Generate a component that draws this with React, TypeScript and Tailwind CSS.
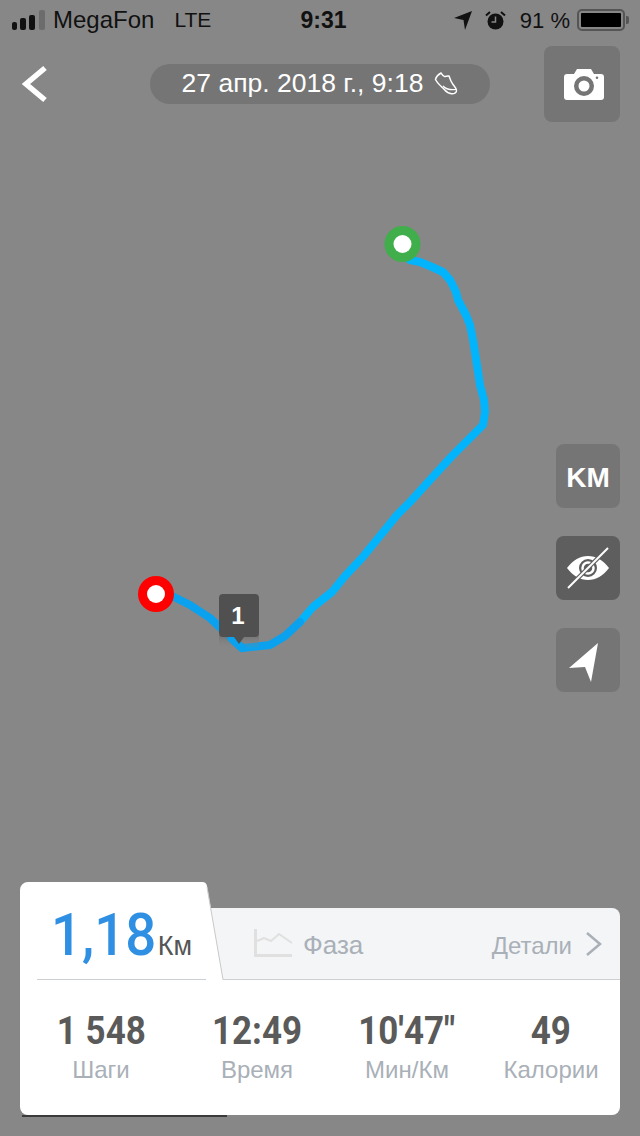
import React from "react";

const upper = "410,260 420,262 432,267 443,272 450,280 456,292 458,300 466,315 470,325 473,340 477,365 480,385 484,400 485,412 483,425 470,438 452,456 430,480 410,502 397,515 362,558 345,576 332,592 313,607 300,622";
const lower = "300,622 285,636 270,645 242,648 228,635 210,618 190,605 172,596";

function RouteMap() {
  return (
    <svg className="absolute inset-0" width="640" height="1136" viewBox="0 0 640 1136" fill="none">
      <defs>
        <linearGradient id="pinShadow" x1="0" y1="0" x2="0" y2="1">
          <stop offset="0" stopColor="#6e6e6e" stopOpacity=".8" />
          <stop offset="1" stopColor="#878787" stopOpacity="0" />
        </linearGradient>
      </defs>
      <polyline points={upper} stroke="#02b4fc" strokeWidth="8" strokeLinejoin="round" strokeLinecap="round" />
      <polyline points={lower} stroke="#0aa2ee" strokeWidth="8" strokeLinejoin="round" strokeLinecap="round" />
      <circle cx="402.500" cy="244" r="18" fill="#3fae4b" />
      <circle cx="402.500" cy="244" r="9" fill="#fff" />
      <circle cx="156" cy="594" r="18" fill="#ff0000" />
      <circle cx="156" cy="594" r="9" fill="#fff" />
      <rect x="219" y="635" width="40" height="14" fill="url(#pinShadow)" />
      <polyline points="242,648 232,639" stroke="#0aa2ee" strokeWidth="8" strokeLinecap="round" />
      <path d="M223 594h32a4 4 0 0 1 4 4v35a4 4 0 0 1-4 4h-11l-5 7-5-7h-11a4 4 0 0 1-4-4v-35a4 4 0 0 1 4-4z" fill="#505050" />
    </svg>
  );
}

function StatusBar() {
  return (
    <div className="grid h-10 grid-cols-[1fr_auto_1fr] items-center pl-3 pr-[11px] text-[#111] text-[22px]">
      <div className="flex items-center">
        <div className="mb-[1px] flex items-end gap-[3px]">
          <span className="h-2 w-[5px] rounded-[2px] bg-[#111]" />
          <span className="h-3 w-[6px] rounded-[2px] bg-[#111]" />
          <span className="h-[15px] w-[6px] rounded-[2px] bg-[#111]" />
          <span className="ml-[1px] h-5 w-[6px] rounded-[2px] bg-[#6c6c6c]" />
        </div>
        <span className="ml-[8px] text-[24px]">MegaFon</span>
        <span className="ml-[20px] text-[21px]">LTE</span>
      </div>
      <span className="ml-[6px] text-[23px] font-bold text-[#111]">9:31</span>
      <div className="flex items-center justify-end">
        <svg className="-ml-[2px]" width="20" height="20" viewBox="0 0 20 20">
          <path d="M1 8 19 1 12 20 10.500 10z" fill="#111" />
        </svg>
        <svg className="ml-[12px]" width="21" height="21" viewBox="0 0 21 21" fill="none">
          <circle cx="10.500" cy="11.500" r="8" fill="#111" />
          <path d="M10.500 6.500v5.500h-4" stroke="#878787" strokeWidth="1.500" />
          <path d="M1 5.500 5 2M20 5.500 16 2" stroke="#111" strokeWidth="2" />
        </svg>
        <span className="ml-[14px]">91 %</span>
        <div className="ml-[7px] flex items-center">
          <div className="h-[22px] w-[48px] rounded-[5px] border-[2px] border-[#555] p-[2px]">
            <div className="h-full w-full rounded-[1px] bg-black" />
          </div>
          <span className="ml-[1px] h-2 w-[3px] rounded-r-[2px] bg-[#555]" />
        </div>
      </div>
    </div>
  );
}

function NavRow() {
  return (
    <div className="mt-[6px] flex h-[76px] items-center pl-[22px]">
      <svg width="26" height="38" viewBox="0 0 26 38" fill="none">
        <path d="M23 3 4 19l19 16" stroke="#fff" strokeWidth="5.500" />
      </svg>
      <div className="ml-[102px] flex h-10 w-[340px] items-center justify-center rounded-[20px] bg-[#757575] text-[26.500px] text-white">
        <span>27 апр. 2018 г., 9:18</span>
        <svg className="ml-[11px]" width="24" height="24" viewBox="0 0 24 24" fill="none">
          <path d="M1.500 7.500C2 5 4.500 2.500 7 1c1 1.500 2 3.500 3.500 3.500 1.500 0 3-1 4.500-.5 1 3 2 6 4 8.500 1.500 2 3.500 3.500 3.500 6 0 2.500-2.500 3.500-5 3.200-3-.3-5-1.700-7-4C7.500 14.500 3.500 11.500 1.500 7.500z" stroke="#fff" strokeWidth="1.500" strokeLinejoin="round" />
          <path d="M9 14c3 3.500 8 4 13 3.500" stroke="#fff" strokeWidth="1.200" />
        </svg>
      </div>
      <div className="ml-[54px] flex h-[76px] w-[76px] items-center justify-center rounded-lg bg-[#757575] pl-[3px]">
        <svg width="40" height="32" viewBox="0 0 40 32">
          <path fillRule="evenodd" d="M13 1h14l3 5h7a3 3 0 0 1 3 3v20a3 3 0 0 1-3 3H3a3 3 0 0 1-3-3V9a3 3 0 0 1 3-3h7zM20 8a10 10 0 1 0 0 20 10 10 0 0 0 0-20zm0 4.500a5.500 5.500 0 1 1 0 11 5.500 5.500 0 0 1 0-11zM33 8.500a1.300 1.300 0 1 0 0 2.600 1.300 1.300 0 0 0 0-2.600z" fill="#fff" />
        </svg>
      </div>
    </div>
  );
}

function SideButtons() {
  return (
    <div className="mr-5 mt-[322px] flex flex-col gap-7 self-end">
      <div className="flex h-16 w-16 items-center justify-center rounded-lg bg-[#757575] pt-1 text-[28px] font-bold text-white">
        KM
      </div>
      <div className="flex h-16 w-16 items-center justify-center rounded-lg bg-[#5e5e5e]">
        <svg width="44" height="44" viewBox="0 0 44 44" fill="none">
          <path fillRule="evenodd" d="M1 22C7 14 14 10 22 10s15 4 21 12c-6 8-13 12-21 12S7 30 1 22zm21-9a9 9 0 1 0 0 18 9 9 0 0 0 0-18z" fill="#fff" />
          <circle cx="22" cy="22" r="5.500" stroke="#fff" strokeWidth="2.500" />
          <path d="M2 42 42 2" stroke="#5e5e5e" strokeWidth="4.500" />
          <path d="M2 42 42 2" stroke="#fff" strokeWidth="2" />
        </svg>
      </div>
      <div className="flex h-16 w-16 items-center justify-center rounded-lg bg-[#757575]">
        <svg className="mr-[8px] mt-[6px]" width="30" height="40" viewBox="0 0 30 40">
          <path d="M29 0 22 39 16 24 0 25z" fill="#fff" />
        </svg>
      </div>
    </div>
  );
}

const stats = [
  { value: "1 548", label: "Шаги", w: "w-[162px]" },
  { value: "12:49", label: "Время", w: "w-[150px]" },
  { value: "10'47\"", label: "Мин/Км", w: "w-[150px]" },
  { value: "49", label: "Калории", w: "w-[138px]" },
];

function Card() {
  return (
    <div className="relative mx-5 mb-[21px] mt-auto h-[233px] w-[600px]">
      <div className="absolute bottom-[-2px] left-[2px] h-[2px] w-[205px] bg-[#3a3a3a]" />
      <div className="relative flex h-[98px] w-full">
        <div className="relative z-10 -mr-[30px] w-[203px] shrink-0">
          <svg className="absolute left-0 top-0" width="204" height="98" viewBox="0 0 204 98">
            <path d="M0 98V8a8 8 0 0 1 8-8h174a5 5 0 0 1 5 4l16 94z" fill="#fff" />
            <path d="M187 5l16 92.500" stroke="#c8c8c8" strokeWidth="1" fill="none" />
            <path d="M17 97.500h169" stroke="#cdd0d3" strokeWidth="1" />
          </svg>
          <div className="relative flex items-baseline pl-[31px] pt-[18px] font-['Roboto','Liberation_Sans',sans-serif] leading-none">
            <span className="origin-left text-[60px] font-medium leading-[70px] text-[#2f8fe2] scale-x-[.91]">1,18</span>
            <span className="-ml-[9px] font-['Liberation_Sans',sans-serif] text-[27px] text-[#555]">Км</span>
          </div>
        </div>
        <div className="mt-[26px] flex h-[72px] flex-1 items-center rounded-tr-lg border-b border-[#cdd0d3] bg-[#f4f5f6] pl-[61px] pt-[4px] text-[#a9b0b8]">
          <svg className="-mt-[4px]" width="40" height="29" viewBox="0 0 40 29" fill="none">
            <path d="M1.500 0v26.500H38" stroke="#e0e0e0" strokeWidth="3" />
            <path d="M3 12l7-3 7 3 8-7 13 9" stroke="#e0e0e0" strokeWidth="2" />
          </svg>
          <span className="ml-[9px] text-[26px]">Фаза</span>
          <span className="ml-auto text-[24px]">Детали</span>
          <svg className="-mt-[3px] ml-[13px] mr-[17px]" width="18" height="26" viewBox="0 0 18 26" fill="none">
            <path d="m2 2 13 11L2 24" stroke="#a9b0b8" strokeWidth="2.500" />
          </svg>
        </div>
      </div>
      <div className="flex h-[135px] rounded-b-lg bg-white">
        {stats.map((s) => (
          <div key={s.label} className={`flex flex-col items-center pt-[28px] ${s.w}`}>
            <span className="whitespace-nowrap font-['Roboto','Liberation_Sans',sans-serif] text-[38px] font-bold leading-[46px] text-[#5a5a5a] scale-x-[.92]">
              {s.value}
            </span>
            <span className="mt-[3px] text-[24px] leading-[26px] text-[#a9b0b8]">{s.label}</span>
          </div>
        ))}
      </div>
    </div>
  );
}

export default function App() {
  return (
    <div className="relative h-[1136px] w-[640px] overflow-hidden bg-[#878787] font-['Liberation_Sans',Arial,sans-serif]">
      <RouteMap />
      <span className="absolute left-[218px] top-[594px] flex h-[43px] w-10 items-center justify-center text-[24px] font-bold text-white">1</span>
      <div className="relative flex h-full flex-col">
        <StatusBar />
        <NavRow />
        <SideButtons />
        <Card />
      </div>
    </div>
  );
}
